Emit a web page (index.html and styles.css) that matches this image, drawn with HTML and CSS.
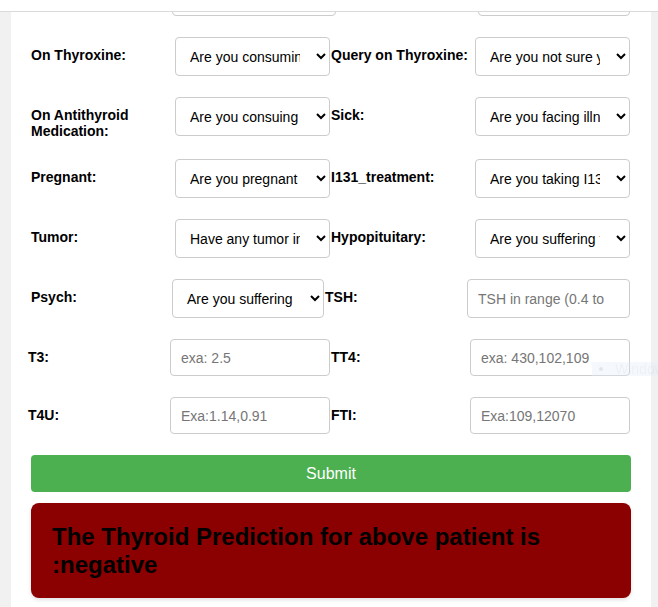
FILE: index.html
```html
<!DOCTYPE html>
<html lang="en">
<head>
<meta charset="utf-8">
<title>Thyroid Prediction</title>
<link rel="stylesheet" href="styles.css">
</head>
<body>
<header class="topbar"></header>
<main class="page">
  <form class="form">
    <div class="row row--top">
      <label class="label">Age:</label>
      <input class="input" type="number" placeholder="Enter your age">
      <label class="label label--right">Sex:</label>
      <select class="select"><option selected>Select your gender</option></select>
    </div>

    <div class="row">
      <label class="label">On Thyroxine:</label>
      <select class="select"><option selected>Are you consuming Thyroxine?</option></select>
      <label class="label label--right">Query on Thyroxine:</label>
      <select class="select"><option selected>Are you not sure you are on Thyroxine?</option></select>
    </div>

    <div class="row">
      <label class="label">On Antithyroid Medication:</label>
      <select class="select"><option selected>Are you consuing Antithyroid Medication?</option></select>
      <label class="label label--right">Sick:</label>
      <select class="select"><option selected>Are you facing illness?</option></select>
    </div>

    <div class="row">
      <label class="label">Pregnant:</label>
      <select class="select"><option selected>Are you pregnant</option></select>
      <label class="label label--right">I131_treatment:</label>
      <select class="select"><option selected>Are you taking I131 treatment?</option></select>
    </div>

    <div class="row">
      <label class="label">Tumor:</label>
      <select class="select"><option selected>Have any tumor in thyroid?</option></select>
      <label class="label label--right">Hypopituitary:</label>
      <select class="select"><option selected>Are you suffering from Hypopituitary?</option></select>
    </div>

    <div class="row row--psych">
      <label class="label">Psych:</label>
      <select class="select"><option selected>Are you suffering from Psych?</option></select>
      <label class="label label--right">TSH:</label>
      <input class="input" type="number" placeholder="TSH in range (0.4 to 4.0)">
    </div>

    <div class="row row--lab">
      <label class="label">T3:</label>
      <input class="input input--short" type="text" placeholder="exa: 2.5">
      <label class="label label--right">TT4:</label>
      <input class="input input--short" type="text" placeholder="exa: 430,102,109">
    </div>

    <div class="row row--lab">
      <label class="label">T4U:</label>
      <input class="input input--short" type="text" placeholder="Exa:1.14,0.91">
      <label class="label label--right">FTI:</label>
      <input class="input input--short" type="text" placeholder="Exa:109,12070">
    </div>

    <button class="submit" type="button">Submit</button>

    <div class="result">
      <h2 class="result__text">The Thyroid Prediction for above patient is :negative</h2>
    </div>
  </form>
</main>
<div class="watermark"><span class="watermark__dot"></span>Windows</div>
</body>
</html>
```

FILE: styles.css
```css
* {
  box-sizing: border-box;
}

html,
body {
  overflow: hidden;
}

body {
  margin: 0;
  background: #f1f1f1;
  font-family: "Liberation Sans", Arial, sans-serif;
  color: #000;
}

.topbar {
  height: 12px;
  background: #fff;
  border-bottom: 1px solid #dadada;
}

.page {
  width: 640px;
  min-height: 595px;
  margin-left: 11px;
  padding: 0 20px 20px;
  background: #fff;
  overflow: hidden;
}

.form {
  margin-top: -35px;
}

.row {
  display: grid;
  grid-template-columns: 144px 155px 145px 155px;
  align-items: start;
  margin-bottom: 21px;
}

.row--top {
  grid-template-columns: 141px 164px 142px 152px;
}

.row--psych {
  grid-template-columns: 141px 152px 143px 163px;
}

.row--lab {
  margin-left: -3px;
  grid-template-columns: 142px 160px 140px 160px;
}

.label {
  font-size: 14px;
  font-weight: bold;
  line-height: 16px;
  padding-top: 10px;
  margin-bottom: -1px;
  color: #000;
}

.label--right {
  padding-left: 1px;
}

.select,
.input {
  width: 100%;
  height: 39px;
  margin: 0;
  padding: 10px;
  border: 1px solid #cccccc;
  border-radius: 4px;
  background: #fff;
  color: #000;
  font: 14px "Liberation Sans", Arial, sans-serif;
}

.select {
  padding-right: 13px;
}

.input--short {
  height: 37px;
}

.input::placeholder {
  color: #767676;
}

.submit {
  display: block;
  width: 100%;
  height: 37px;
  margin: 0;
  border: none;
  border-radius: 4px;
  background: #4caf50;
  color: #fff;
  font: 16px "Liberation Sans", Arial, sans-serif;
}

.result {
  margin-top: 11px;
  padding: 20px 21px 19px;
  border-radius: 8px;
  background: #8b0000;
  box-shadow: 0 2px 4px rgba(0, 0, 0, 0.12);
}

.result__text {
  margin: 0;
  font-size: 24px;
  line-height: 28px;
  font-weight: bold;
  color: #000;
}

.watermark {
  position: absolute;
  left: 592px;
  top: 362px;
  width: 66px;
  height: 14px;
  display: flex;
  align-items: center;
  gap: 12px;
  padding-left: 7px;
  background: rgba(225, 234, 248, 0.35);
  color: rgba(0, 0, 0, 0.05);
  font: 14px "Liberation Sans", Arial, sans-serif;
  overflow: hidden;
  white-space: nowrap;
}

.watermark__dot {
  width: 4px;
  height: 4px;
  border-radius: 50%;
  background: rgba(0, 0, 0, 0.08);
  flex: none;
}
```
